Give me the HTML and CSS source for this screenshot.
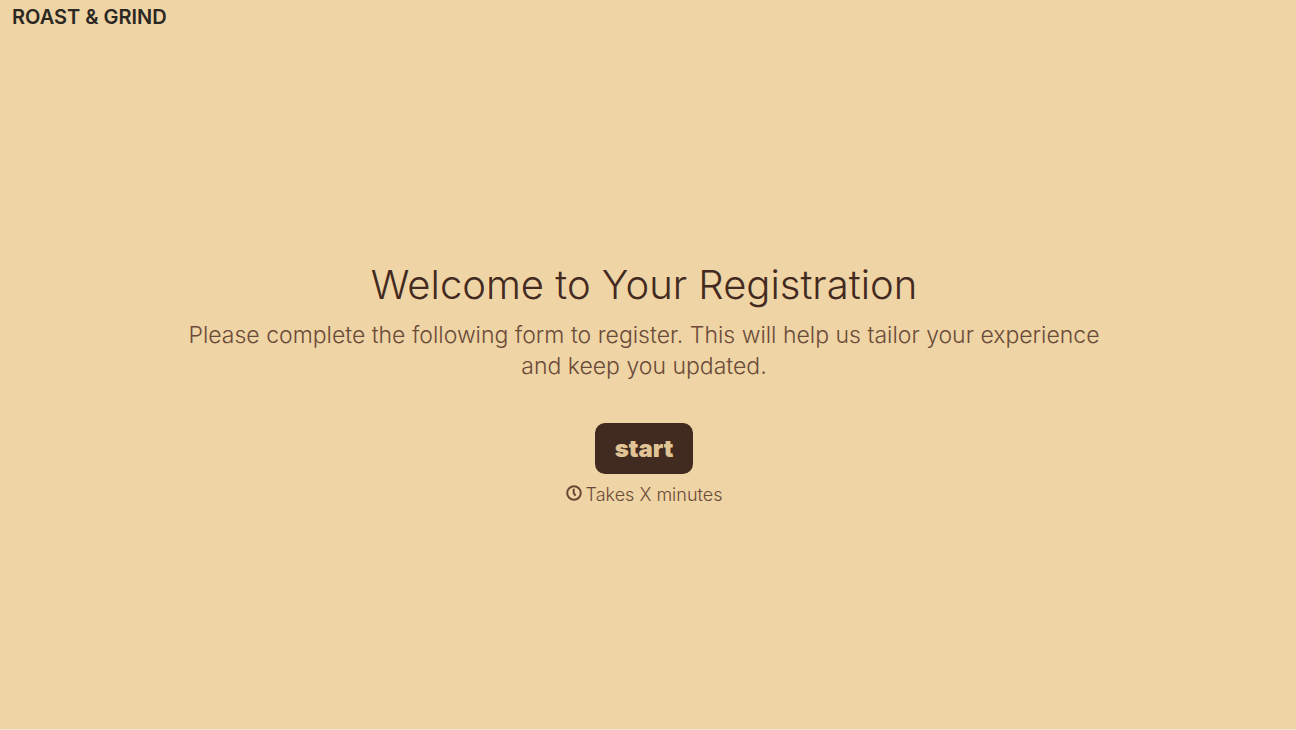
FILE: index.html
```html
<!DOCTYPE html>
<html lang="en">
<head>
<meta charset="utf-8">
<meta name="viewport" content="width=device-width, initial-scale=1">
<title>Registration</title>
<link rel="stylesheet" href="styles.css">
</head>
<body class="page">
<header class="header"><span class="brand">ROAST &amp; GRIND</span></header>
<main class="welcome">
<h1 class="title">Welcome to Your Registration</h1>
<p class="intro">Please complete the following form to register. This will help us tailor your experience and keep you updated.</p>
<button class="start" type="button">start</button>
<p class="duration">
<svg class="clock" viewBox="0 0 16 16" aria-hidden="true"><circle cx="8" cy="8" r="6.8"/><path d="M7.7 3.8v4.1l1.8 2.9"/></svg>
<span>Takes X minutes</span>
</p>
</main>
</body>
</html>
```
FILE: styles.css
```css
* { box-sizing: border-box; }
.page {
  margin: 0;
  min-height: 100vh;
  display: flex;
  flex-direction: column;
  background: #efd4a5;
  color: #432a21;
  font-family: Inter, "Liberation Sans", sans-serif;
  border-bottom: 1px solid #f3e6d0;
}
.header { padding: 7px 12px; }
.brand {
  display: block;
  font-size: 20px;
  line-height: 20px;
  font-weight: 600;
  color: #2b2723;
}
.welcome {
  flex: 1;
  display: flex;
  flex-direction: column;
  align-items: center;
  justify-content: center;
  padding: 4px 188px 0 180px;
  text-align: center;
}
.title {
  margin: 0 0 11px;
  font-size: 40px;
  line-height: 48px;
  font-weight: 300;
}
.intro {
  margin: 0 0 41px;
  font-size: 23px;
  line-height: 31px;
  font-weight: 300;
  color: #6a4b39;
}
.start {
  padding: 0 20px;
  height: 51px;
  border: 0;
  border-radius: 10px;
  background: #412a1f;
  color: #e1c496;
  font-family: inherit;
  font-size: 24px;
  font-weight: 900;
}
.duration {
  display: flex;
  align-items: flex-start;
  gap: 4px;
  margin: 10px 0 0;
  font-size: 18px;
  line-height: 22px;
  font-weight: 300;
  color: #6a4b39;
}
.clock {
  width: 16px;
  height: 18px;
  fill: none;
  stroke: #6a4735;
  stroke-width: 2;
}
```
